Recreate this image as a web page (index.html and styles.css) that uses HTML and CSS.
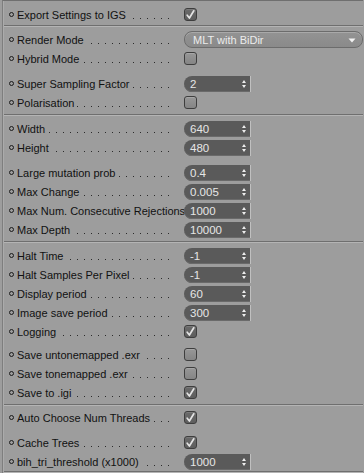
FILE: index.html
```html
<!DOCTYPE html>
<html>
<head>
<meta charset="utf-8">
<link rel="stylesheet" href="styles.css">
</head>
<body>
<div class="panel">
  <div class="group g1">
    <div class="row"><span class="bullet"></span><span class="label"><span class="txt">Export Settings to IGS</span></span><span class="cb on"><svg viewBox="0 0 13 13" width="13" height="13"><path d="M3.2 7.2 L5.4 10 L9.8 2.8" fill="none" stroke="#e4e4e4" stroke-width="1.7" stroke-linecap="round" stroke-linejoin="round"/></svg></span></div>
  </div>
  <div class="sep"></div>
  <div class="group">
    <div class="row"><span class="bullet"></span><span class="label"><span class="txt">Render Mode</span></span><span class="drop"><span class="dtext">MLT with BiDir</span><svg class="darrow" viewBox="0 0 8 5" width="8" height="5"><path d="M0.5 0.5 L7.5 0.5 L4 4.5 Z" fill="#f2f2f2"/></svg></span></div>
    <div class="row"><span class="bullet"></span><span class="label"><span class="txt">Hybrid Mode</span></span><span class="cb"></span></div>
    <div class="spacer s6"></div>
    <div class="row"><span class="bullet"></span><span class="label"><span class="txt">Super Sampling Factor</span></span><span class="spin"><span class="val">2</span><span class="arr"></span></span></div>
    <div class="row"><span class="bullet"></span><span class="label"><span class="txt">Polarisation</span></span><span class="cb"></span></div>
  </div>
  <div class="sep"></div>
  <div class="group">
    <div class="row"><span class="bullet"></span><span class="label"><span class="txt">Width</span></span><span class="spin"><span class="val">640</span><span class="arr"></span></span></div>
    <div class="row"><span class="bullet"></span><span class="label"><span class="txt">Height</span></span><span class="spin"><span class="val">480</span><span class="arr"></span></span></div>
    <div class="spacer s6"></div>
    <div class="row"><span class="bullet"></span><span class="label"><span class="txt">Large mutation prob</span></span><span class="spin"><span class="val">0.4</span><span class="arr"></span></span></div>
    <div class="row"><span class="bullet"></span><span class="label"><span class="txt">Max Change</span></span><span class="spin"><span class="val">0.005</span><span class="arr"></span></span></div>
    <div class="row"><span class="bullet"></span><span class="label"><span class="txt">Max Num. Consecutive Rejections</span></span><span class="spin"><span class="val">1000</span><span class="arr"></span></span></div>
    <div class="row"><span class="bullet"></span><span class="label"><span class="txt">Max Depth</span></span><span class="spin"><span class="val">10000</span><span class="arr"></span></span></div>
  </div>
  <div class="sep"></div>
  <div class="group">
    <div class="row"><span class="bullet"></span><span class="label"><span class="txt">Halt Time</span></span><span class="spin"><span class="val">-1</span><span class="arr"></span></span></div>
    <div class="row"><span class="bullet"></span><span class="label"><span class="txt">Halt Samples Per Pixel</span></span><span class="spin"><span class="val">-1</span><span class="arr"></span></span></div>
    <div class="row"><span class="bullet"></span><span class="label"><span class="txt">Display period</span></span><span class="spin"><span class="val">60</span><span class="arr"></span></span></div>
    <div class="row"><span class="bullet"></span><span class="label"><span class="txt">Image save period</span></span><span class="spin"><span class="val">300</span><span class="arr"></span></span></div>
    <div class="row"><span class="bullet"></span><span class="label"><span class="txt">Logging</span></span><span class="cb on"><svg viewBox="0 0 13 13" width="13" height="13"><path d="M3.2 7.2 L5.4 10 L9.8 2.8" fill="none" stroke="#e4e4e4" stroke-width="1.7" stroke-linecap="round" stroke-linejoin="round"/></svg></span></div>
    <div class="spacer s4"></div>
    <div class="row"><span class="bullet"></span><span class="label"><span class="txt">Save untonemapped .exr</span></span><span class="cb"></span></div>
    <div class="row"><span class="bullet"></span><span class="label"><span class="txt">Save tonemapped .exr</span></span><span class="cb"></span></div>
    <div class="row"><span class="bullet"></span><span class="label"><span class="txt">Save to .igi</span></span><span class="cb on"><svg viewBox="0 0 13 13" width="13" height="13"><path d="M3.2 7.2 L5.4 10 L9.8 2.8" fill="none" stroke="#e4e4e4" stroke-width="1.7" stroke-linecap="round" stroke-linejoin="round"/></svg></span></div>
  </div>
  <div class="sep"></div>
  <div class="group g5">
    <div class="row"><span class="bullet"></span><span class="label"><span class="txt">Auto Choose Num Threads</span></span><span class="cb on"><svg viewBox="0 0 13 13" width="13" height="13"><path d="M3.2 7.2 L5.4 10 L9.8 2.8" fill="none" stroke="#e4e4e4" stroke-width="1.7" stroke-linecap="round" stroke-linejoin="round"/></svg></span></div>
    <div class="spacer s6"></div>
    <div class="row"><span class="bullet"></span><span class="label"><span class="txt">Cache Trees</span></span><span class="cb on"><svg viewBox="0 0 13 13" width="13" height="13"><path d="M3.2 7.2 L5.4 10 L9.8 2.8" fill="none" stroke="#e4e4e4" stroke-width="1.7" stroke-linecap="round" stroke-linejoin="round"/></svg></span></div>
    <div class="row"><span class="bullet"></span><span class="label"><span class="txt">bih_tri_threshold (x1000)</span></span><span class="spin"><span class="val">1000</span><span class="arr"></span></span></div>
  </div>
  <div class="bottom"></div>
</div>
</body>
</html>
```

FILE: styles.css
```css
html, body {
  margin: 0;
  padding: 0;
  background: #9d9d9d;
}
body {
  font-family: "Liberation Sans", Arial, sans-serif;
  font-size: 11px;
  color: #111;
  width: 364px;
  height: 473px;
  overflow: hidden;
}
.panel {
  margin-left: 2px;
  width: 360px;
  border-left: 1px solid #7e7e7e;
  border-top: 1px solid #6f6f6f;
  box-shadow: inset 1px 0 0 #ababab;
}
.group {
  padding: 3px 0 2px 0;
}
.g1 {
  padding: 4px 0 1px 0;
}
.g5 {
  padding: 2px 0 0 0;
}
.spacer.s6 { height: 6px; }
.spacer.s4 { height: 4px; }
.sep {
  height: 0;
  border-top: 1px solid #6f6f6f;
  border-bottom: 1px solid #b4b4b4;
  margin-left: 1px;
}
.bottom {
  height: 0;
  border-top: 1px solid #6f6f6f;
  border-bottom: 1px solid #b4b4b4;
  margin-left: 1px;
}
.row {
  height: 19px;
  display: flex;
  align-items: center;
  padding-left: 6px;
}
.bullet {
  width: 3px;
  height: 3px;
  border: 1px solid #1a1a1a;
  border-radius: 50%;
  margin-right: 3px;
  flex: none;
}
.label {
  width: 158px;
  height: 19px;
  flex: none;
  display: flex;
  align-items: center;
  white-space: nowrap;
  margin-right: 9px;
  background-image: linear-gradient(to right, #2b2b2b 1px, transparent 1px);
  background-size: 7px 1px;
  background-repeat: repeat-x;
  background-position: right 0 top 13px;
}
.label .txt {
  background: #9d9d9d;
  padding-right: 2px;
}
.cb {
  width: 11px;
  height: 11px;
  border: 1px solid #3e3e3e;
  border-radius: 3px;
  background: linear-gradient(#979797, #858585);
  box-shadow: inset 0 1px 0 #a6a6a6;
  position: relative;
  flex: none;
}
.cb.on {
  background: linear-gradient(#6a6a6a, #5e5e5e);
  box-shadow: inset 0 1px 0 #7a7a7a;
}
.cb svg {
  position: absolute;
  left: -1px;
  top: -1px;
}
.drop {
  width: 175px;
  height: 15px;
  border: 1px solid #6c6c6c;
  border-radius: 8px;
  background: linear-gradient(#939393, #8a8a8a);
  box-shadow: inset 0 1px 0 #a9a9a9;
  display: flex;
  align-items: center;
  justify-content: space-between;
  padding: 0 6px 0 8px;
  box-sizing: content-box;
  flex: none;
  width: 163px;
}
.dtext {
  color: #ececec;
  font-size: 11px;
}
.darrow {
  margin-top: 1px;
}
.spin {
  width: 66px;
  height: 16px;
  background: #5a5a5a;
  border-radius: 8px 0 0 8px;
  border-right: 1px solid #c0c0c0;
  box-shadow: inset 0 -1px 0 #6a6a6a;
  display: flex;
  align-items: center;
  justify-content: space-between;
  padding: 0 3px 0 6px;
  box-sizing: border-box;
  flex: none;
  width: 67px;
}
.val {
  color: #e6e6e6;
  font-size: 11.5px;
}
.arr {
  width: 5px;
  height: 8px;
  position: relative;
}
.arr::before, .arr::after {
  content: "";
  position: absolute;
  left: 0;
  border-left: 2.5px solid transparent;
  border-right: 2.5px solid transparent;
}
.arr::before {
  top: 0;
  border-bottom: 3px solid #eeeeee;
}
.arr::after {
  bottom: 0;
  border-top: 3px solid #eeeeee;
}
```
